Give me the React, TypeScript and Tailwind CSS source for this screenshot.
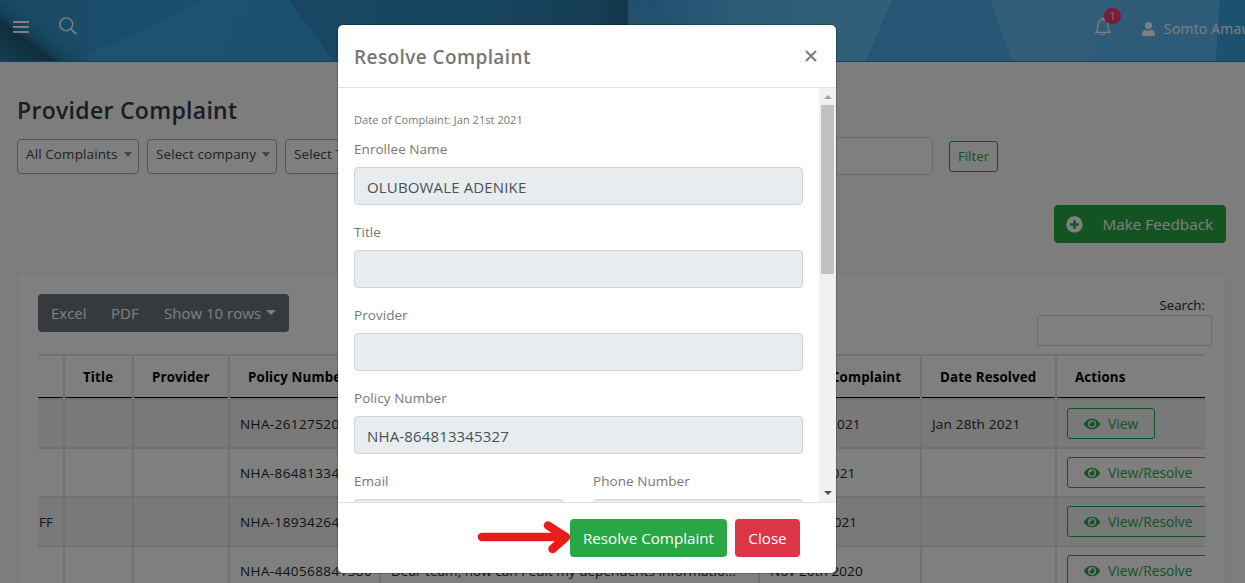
import type { ReactNode } from "react";

function HeaderArt() {
  return (
    <svg className="absolute inset-0 h-full w-full" viewBox="0 0 1245 62" preserveAspectRatio="none">
      <defs>
        <linearGradient id="base" x1="0" x2="1" y1="0" y2="0">
          <stop offset="0" stopColor="#3496cc" />
          <stop offset="0.2" stopColor="#36a0dc" />
          <stop offset="1" stopColor="#36a0dc" />
        </linearGradient>
        <linearGradient id="mid" gradientUnits="userSpaceOnUse" x1="290" x2="628" y1="20" y2="20">
          <stop offset="0" stopColor="#308dc8" />
          <stop offset="0.55" stopColor="#2f8ac2" />
          <stop offset="0.9" stopColor="#2b7ca8" />
          <stop offset="1" stopColor="#276f98" />
        </linearGradient>
        <linearGradient id="right" gradientUnits="userSpaceOnUse" x1="628" x2="890" y1="20" y2="20">
          <stop offset="0" stopColor="#3e9cda" />
          <stop offset="0.4" stopColor="#58b6f0" />
          <stop offset="1" stopColor="#64bef2" />
        </linearGradient>
        <linearGradient id="corner" gradientUnits="userSpaceOnUse" x1="10" x2="46" y1="63.5" y2="15.5">
          <stop offset="0" stopColor="#2a7aa4" />
          <stop offset="0.46" stopColor="#215a7c" />
          <stop offset="0.56" stopColor="#2a7ca8" />
          <stop offset="1" stopColor="#3496cc" stopOpacity="0" />
        </linearGradient>
      </defs>
      <rect width="1245" height="62" fill="url(#base)" />
      <path d="M72 62 206 0H251L217 62Z" fill="#3aa6dc" />
      <path d="M251 0H289L334 62H217Z" fill="#38a2dc" />
      <rect width="130" height="62" fill="url(#corner)" />
      <path d="M289 0H628V62H334Z" fill="url(#mid)" />
      <path d="M628 0H892L866 62H628Z" fill="url(#right)" />
      <path d="M628 0H636L695 38V62H628Z" fill="#46a0d8" />
      <path d="M892 0H990L1012 62H866Z" fill="#4aaee8" />
      <path d="M990 0H1127L1088 62H1012Z" fill="#64baf2" />
      <path d="M1127 0H1220L1216 62H1088Z" fill="#5cb6f0" />
      <path d="M1220 0H1245V62H1216Z" fill="#38a4de" />
      <rect y="61" width="1245" height="1" fill="#2f7fae" />
    </svg>
  );
}

function Eye() {
  return (
    <svg className="h-4 w-4 shrink-0" viewBox="0 0 576 512" fill="currentColor">
      <path d="M572.52 241.4C518.29 135.59 410.93 64 288 64S57.68 135.64 3.48 241.41a32.35 32.35 0 0 0 0 29.19C57.71 376.41 165.07 448 288 448s230.32-71.64 284.52-177.41a32.35 32.35 0 0 0 0-29.19zM288 400a144 144 0 1 1 144-144 143.93 143.93 0 0 1-144 144zm0-240a95.31 95.31 0 0 0-25.31 3.79 47.85 47.85 0 0 1-66.9 66.9A95.78 95.78 0 1 0 288 160z" />
    </svg>
  );
}

function PageHeader() {
  return (
    <header className="relative h-[62px] overflow-hidden">
      <HeaderArt />
      <div className="relative flex h-full items-start text-white">
        <svg className="ml-[13px] mt-[21px] h-3 w-4 shrink-0" viewBox="0 0 16 12" fill="currentColor">
          <path d="M0 0h16v2H0zM0 5h16v2H0zM0 10h16v2H0z" />
        </svg>
        <svg className="ml-[30px] mt-[17px] h-[18px] w-[18px] shrink-0" viewBox="0 0 18 18" fill="none" stroke="currentColor" strokeWidth="1.4">
          <circle cx="7.3" cy="7.3" r="6.4" />
          <path d="m11.800 11.800 5.600 5.400" strokeWidth="1.800" />
        </svg>
        <div className="relative ml-[1018px] mt-[18px] h-[18px] w-4 shrink-0">
          <svg className="h-[18px] w-4" viewBox="0 0 16 18" fill="none" stroke="currentColor" strokeWidth="1.300">
            <path d="M.8 14.400c1.600-1.300 2.100-2.300 2.100-5.200V7c0-3.100 2-5.300 5.100-5.300S13.100 3.900 13.100 7v2.200c0 2.900.5 3.900 2.100 5.200z" />
            <path d="M7.200 1.500V.3h1.600v1.200M6 15.300c.2 2 3.800 2 4 0" />
          </svg>
          <span className="absolute -top-[10px] left-[9px] flex h-4 w-[17px] items-center justify-center rounded-full bg-[#f5366f] text-[10px] leading-none">1</span>
        </div>
        <svg className="ml-[31px] mt-[22px] h-[14px] w-[13px] shrink-0" viewBox="0 0 13 14" fill="currentColor">
          <circle cx="6.500" cy="3.500" r="3.500" />
          <path d="M0 12.500C0 9.800 1.400 8 3.700 8c1.700.9 3.900.9 5.600 0 2.300 0 3.700 1.800 3.700 4.500 0 1-.6 1.500-1.500 1.500h-10C.6 14 0 13.500 0 12.500z" />
        </svg>
        <span className="ml-[9px] mt-[19px] shrink-0 whitespace-nowrap text-[14px] leading-5 tracking-[0.2px]">Somto Amau</span>
      </div>
    </header>
  );
}

function Select({ label, width }: { label: string; width: string }) {
  return (
    <div className={`flex h-[35px] shrink-0 items-start justify-between rounded-[4px] border border-[#aaa] bg-white pl-2 pr-[6px] text-[13.5px] text-[#444] ${width}`}>
      <span className="mt-1 whitespace-nowrap leading-5 tracking-[0.1px]">{label}</span>
      <span className="mt-3 border-x-4 border-t-[5px] border-x-transparent border-t-[#888]" />
    </div>
  );
}

const COLUMNS = "grid grid-cols-[27px_69px_96px_151px_379px_162px_135px_148px]";
const CELL = "overflow-hidden whitespace-nowrap border-[#dee2e6] flex items-center";

const rows = [
  { name: "", policy: "NHA-261275209481", message: "", filed: "Jan 22nd 2021", resolved: "Jan 28th 2021", action: "View", shade: "bg-[#f2f2f2]" },
  { name: "", policy: "NHA-864813345327", message: "", filed: "Jan 21st 2021", resolved: "", action: "View/Resolve", shade: "bg-white" },
  { name: "FF", policy: "NHA-189342648823", message: "", filed: "Jan 20th 2021", resolved: "", action: "View/Resolve", shade: "bg-[#f2f2f2]" },
  { name: "", policy: "NHA-440568841380", message: "Dear team, how can I edit my dependents informatio...", filed: "Nov 26th 2020", resolved: "", action: "View/Resolve", shade: "bg-white" },
];

function ComplaintTable() {
  const heads = ["", "Title", "Provider", "Policy Number", "Complaint", "Date of Complaint", "Date Resolved", "Actions"];
  return (
    <div className="w-[1167px] overflow-hidden border-t-2 border-[#dee2e6] text-[13.5px] text-[#212529]">
      <div className={`${COLUMNS} h-11 border-b-2 border-[#dee2e6]`}>
        {heads.map((h, i) => (
          <div key={i} className="flex flex-col">
            <div className={`${CELL} h-[41px] pl-[18px] pt-0.5 text-[13.300px] font-bold tracking-[0.15px] text-black ${i < 7 ? "border-r-2" : ""}`}>{h}</div>
            <div className={`h-px bg-black ${i < 7 ? "mr-[2px]" : ""}`} />
          </div>
        ))}
      </div>
      {rows.map((r) => (
        <div key={r.policy} className={`${COLUMNS} h-[49px] border-b-2 border-[#dee2e6] ${r.shade}`}>
          <div className={`${CELL} border-r-2 pl-px pt-0.5`}>{r.name}</div>
          <div className={`${CELL} border-r-2`} />
          <div className={`${CELL} border-r-2`} />
          <div className={`${CELL} border-r-2 pl-[10px] pt-0.5 tracking-[0.400px]`}>{r.policy}</div>
          <div className={`${CELL} border-r-2 pl-[10px] pt-0.5 tracking-[0.04px]`}>{r.message}</div>
          <div className={`${CELL} border-r-2 pl-[10px] pt-0.5 tracking-[0.100px]`}>{r.filed}</div>
          <div className={`${CELL} border-r-2 pl-[10px] pt-0.5 tracking-[0.2px]`}>{r.resolved}</div>
          <div className={`${CELL} pl-[10px]`}>
            <button className="flex h-[31px] shrink-0 items-center gap-2 rounded-[3px] border border-[#28a745] px-4 text-[13.800px] text-[#28a745]">
              <Eye />
              <span className="pt-0.5">{r.action}</span>
            </button>
          </div>
        </div>
      ))}
    </div>
  );
}

function Page() {
  return (
    <div className="h-[583px] w-[1245px] overflow-hidden bg-[#fafafa]">
      <PageHeader />
      <main className="pl-[17px]">
        <h1 className="pt-[31px] text-[23px] font-semibold leading-[35px] tracking-[0.3px] text-[#343a40]">Provider Complaint</h1>
        <div className="mt-[9px] flex h-[38px] items-center gap-2">
          <Select label="All Complaints" width="w-[122px]" />
          <Select label="Select company" width="w-[130px]" />
          <Select label="Select Type" width="w-[130px]" />
          <div className="ml-[2px] h-[38px] w-[508px] rounded-[4px] border border-[#ced4da] bg-white" />
          <button className="ml-2 h-[31px] w-[49px] rounded-[3px] border border-[#28a745] pt-0.5 text-[13.300px] text-[#28a745]">Filter</button>
        </div>
        <div className="mr-[19px] mt-[30px] flex justify-end">
          <button className="flex h-[38px] w-[172px] items-center justify-between rounded-[4px] bg-[#28a745] pl-3 pr-[13px] text-[15.300px] text-white">
            <svg className="h-[17px] w-[17px]" viewBox="0 0 17 17">
              <circle cx="8.500" cy="8.500" r="8.200" fill="#fff" />
              <path d="M8.500 4.200v8.600M4.200 8.500h8.600" stroke="#28a745" strokeWidth="2.400" />
            </svg>
            <span>Make Feedback</span>
          </button>
        </div>
        <section className="mt-[30px] h-[400px] w-[1209px] rounded-[4px] border border-[#f2f2f2] bg-white pl-5 pt-5 shadow-[0_0_6px_rgba(0,0,0,0.04)]">
          <div className="flex h-[60px] items-start justify-between pr-[13px]">
            <div className="flex h-[38px] w-[251px] shrink-0 items-center rounded-[4px] bg-[#6c757d] text-[15px] text-white">
              <span className="ml-[13px] w-[60px]">Excel</span>
              <span className="w-[53px]">PDF</span>
              <span className="whitespace-nowrap">Show 10 rows</span>
              <span className="mb-0.5 ml-[5px] border-x-[5px] border-t-[5px] border-x-transparent border-t-white" />
            </div>
            <label className="flex flex-col items-end text-[13.300px] leading-5 text-[#212529]">
              <span className="mr-[7px] mt-px">Search:</span>
              <span className="h-[31px] w-[175px] rounded-[3px] border border-[#ced4da]" />
            </label>
          </div>
          <ComplaintTable />
        </section>
      </main>
    </div>
  );
}

function Field({ label, value = "" }: { label: string; value?: string }) {
  return (
    <div className="mb-4 flex flex-col">
      <span className="mb-[7px] pt-px text-[13.500px] leading-[21px] tracking-[0.050px] text-[#777]">{label}</span>
      <div className="flex h-[38px] items-center rounded-[4px] border border-[#ced4da] bg-[#e9ecef] px-3 pt-0.5 text-[15px] tracking-[0.150px] text-[#495057]">{value}</div>
    </div>
  );
}

function ModalButton({ className, children }: { className: string; children: ReactNode }) {
  return <button className={`h-[38px] whitespace-nowrap rounded-[4px] text-[15.200px] text-white ${className}`}>{children}</button>;
}

function ResolveModal() {
  return (
    <div className="absolute left-[338px] top-[25px] flex h-[548px] w-[498px] flex-col overflow-hidden rounded-[5px] bg-white shadow-[0_0_0_1px_rgba(0,0,0,0.2)]">
      <div className="flex h-[63px] shrink-0 items-center justify-between border-b border-[#dee2e6] pl-4 pr-[19px]">
        <h2 className="pt-0.5 text-[19px] font-semibold tracking-[0.400px] text-[#777]">Resolve Complaint</h2>
        <svg className="h-3 w-3" viewBox="0 0 12 12" fill="none" stroke="#7f7f7f" strokeWidth="2.200"><path d="m1 1 10 10M11 1 1 11" /></svg>
      </div>
      <div className="flex h-[414px] shrink-0">
        <div className="w-[481px] overflow-hidden pl-4 pr-4 pt-[22px]">
          <p className="mb-2 text-[11px] leading-5 tracking-[0.050px] text-[#777]">Date of Complaint: Jan 21st 2021</p>
          <Field label="Enrollee Name" value="OLUBOWALE ADENIKE" />
          <Field label="Title" />
          <Field label="Provider" />
          <Field label="Policy Number" value="NHA-864813345327" />
          <div className="grid grid-cols-2 gap-[29px]">
            <Field label="Email" />
            <Field label="Phone Number" />
          </div>
        </div>
        <div className="flex w-[17px] shrink-0 flex-col items-center bg-[#f1f1f1]">
          <span className="mt-[7px] border-x-[4px] border-b-[4px] border-x-transparent border-b-[#a3a3a3]" />
          <span className="mt-[6px] h-[169px] w-[13px] bg-[#c1c1c1]" />
          <span className="mb-[7px] mt-auto border-x-[4px] border-t-[4px] border-x-transparent border-t-[#505050]" />
        </div>
      </div>
      <div className="flex flex-1 items-center justify-end border-t border-[#dee2e6] pr-9">
        <svg className="relative z-10 -mr-[2px] h-9 w-24" viewBox="0 0 96 36" fill="none" stroke="#e81c1c" strokeWidth="8.500" strokeLinecap="round" strokeLinejoin="round">
          <path d="M6 17H89M72 5.500l18 11.500L76.500 29" />
        </svg>
        <ModalButton className="w-[157px] bg-[#28a745]">Resolve Complaint</ModalButton>
        <ModalButton className="ml-2 w-[65px] bg-[#dc3545]">Close</ModalButton>
      </div>
    </div>
  );
}

export default function App() {
  return (
    <div className="relative h-[583px] w-[1245px] overflow-hidden font-['Open_Sans','Noto_Sans',sans-serif]">
      <Page />
      <div className="absolute inset-0 bg-black/50" />
      <ResolveModal />
    </div>
  );
}
